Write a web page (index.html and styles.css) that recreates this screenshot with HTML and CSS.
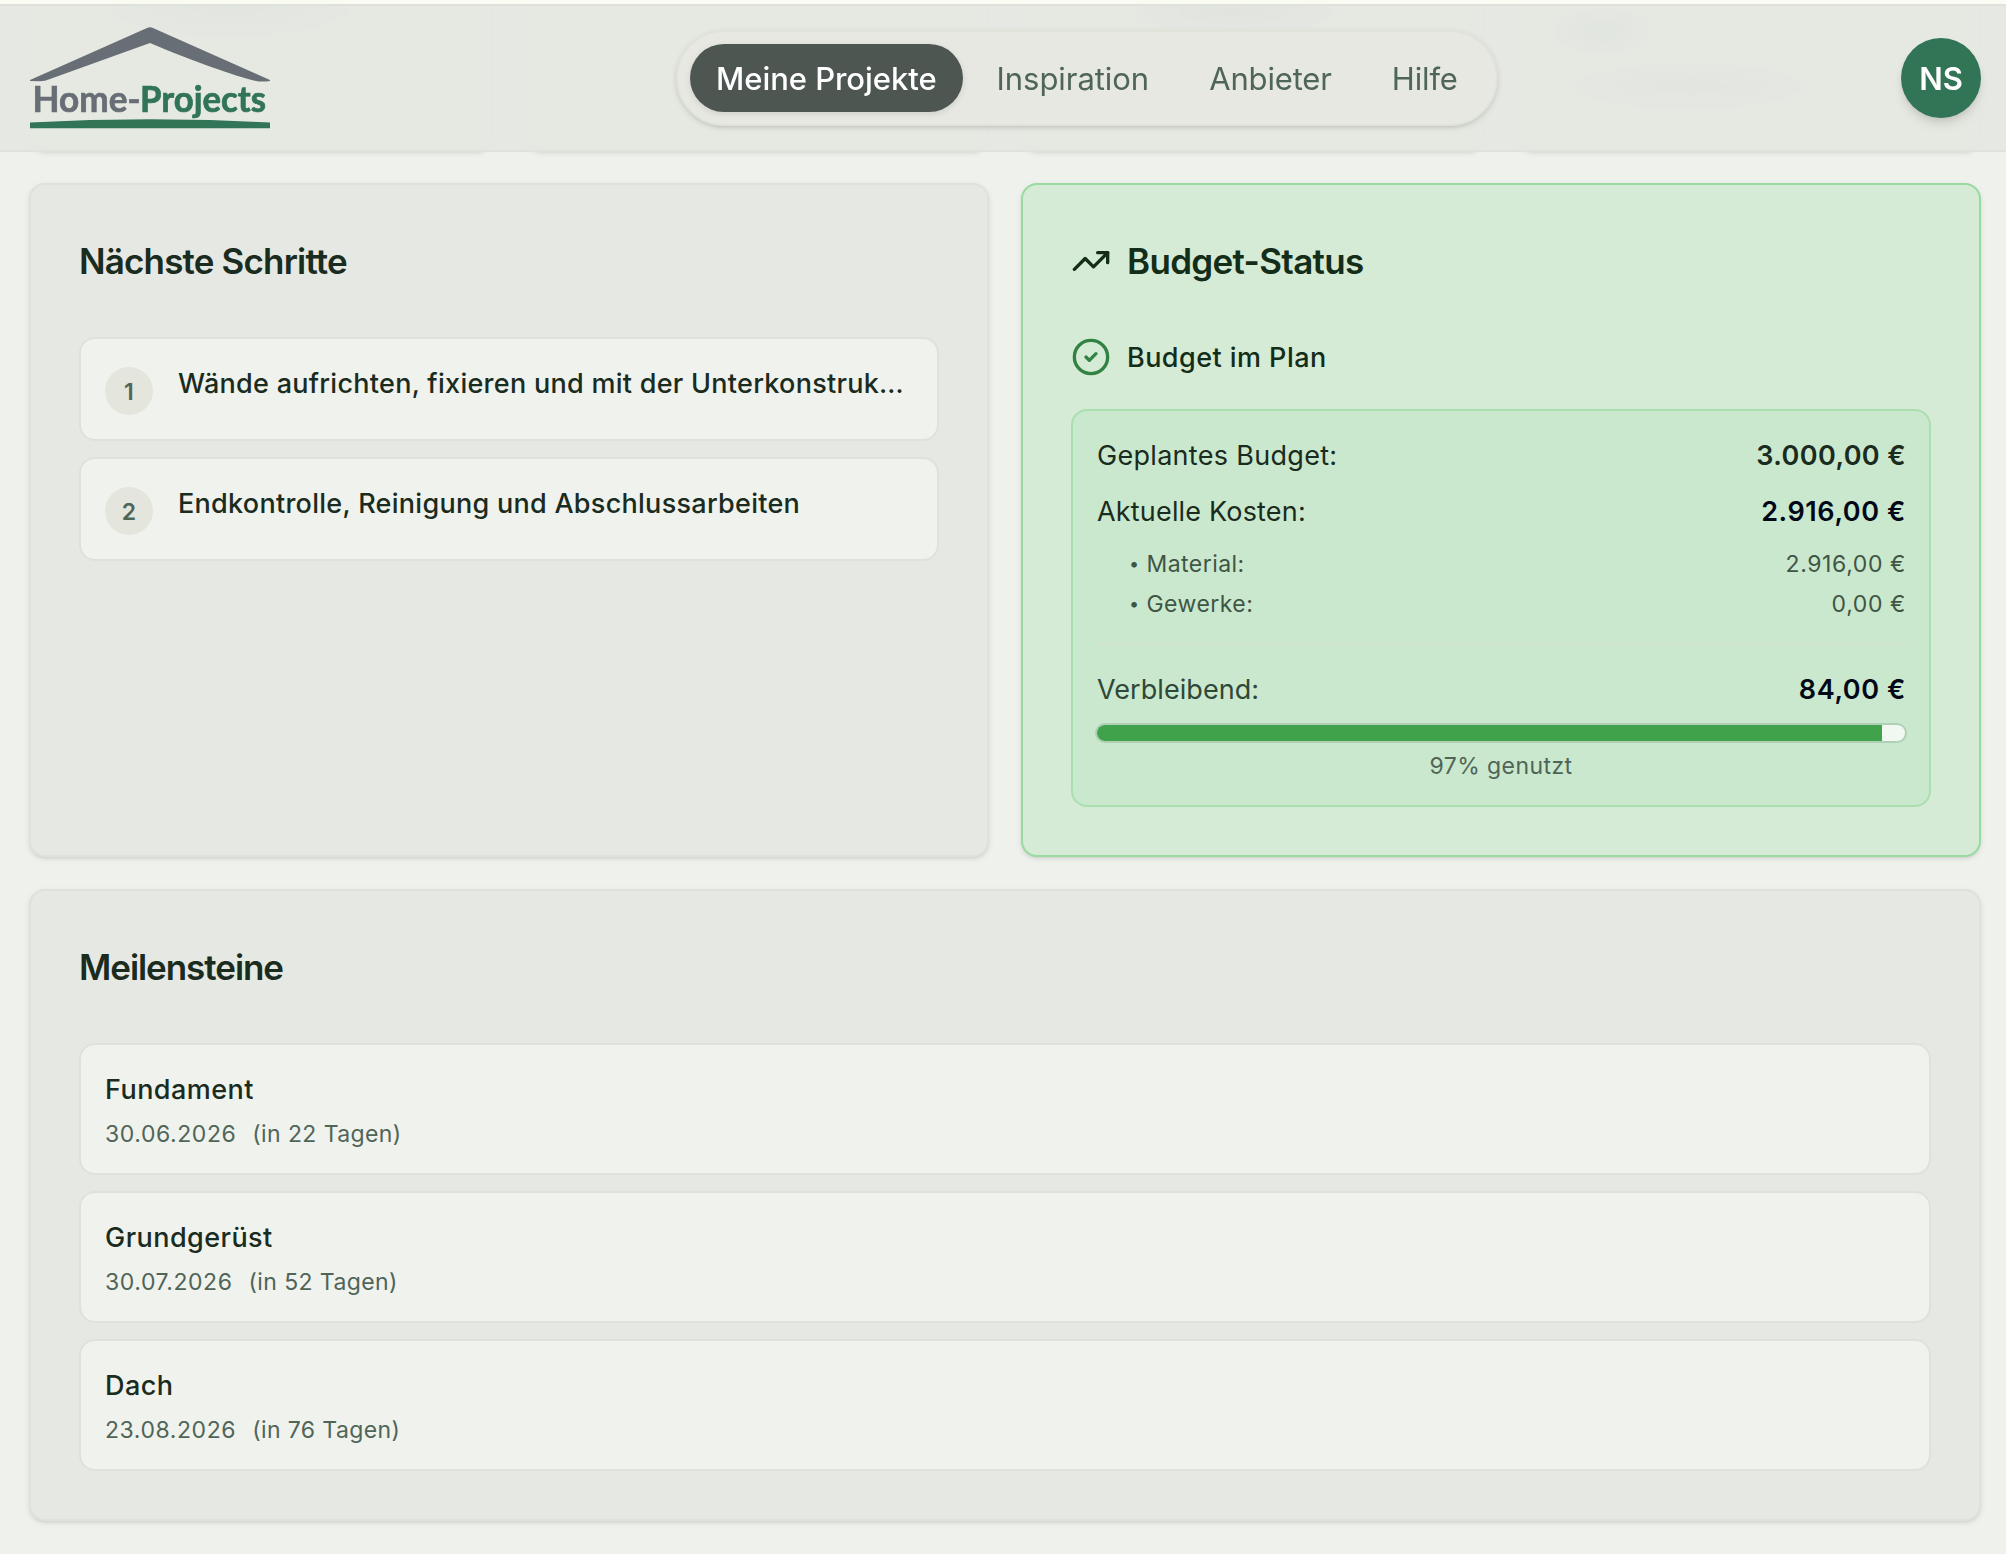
FILE: index.html
```html
<!DOCTYPE html>
<html lang="de">
<head>
    <meta charset="UTF-8">
    <meta name="viewport" content="width=device-width, initial-scale=1.0">
    <title>Home-Projects</title>
    <link rel="stylesheet" href="styles.css">
</head>
<body>
    <header class="header">
        <a class="logo" href="#">
            <svg class="logo-svg" width="240" height="104" viewBox="0 0 240 104">
                <path fill="#686e75" d="M0 54V53L117 1Q120 -.6 123 1L240 53V54Q232 55 226 54C205 49 165 35 120 16L20 52Q15 54.300 10 54.300Z"/>
                <text class="logo-text logo-home" x="2.5" y="85" textLength="108" lengthAdjust="spacingAndGlyphs">Home-</text>
                <text class="logo-text logo-projects" x="110" y="85" textLength="126" lengthAdjust="spacingAndGlyphs">Projects</text>
                <path fill="#317456" d="M0 95.500Q120 89 240 95.500V101.300H0Z"/>
            </svg>
        </a>
        <nav class="nav">
            <a class="nav-item active" href="#">Meine Projekte</a>
            <a class="nav-item" href="#">Inspiration</a>
            <a class="nav-item nav-tight" href="#">Anbieter</a>
            <a class="nav-item nav-tight" href="#">Hilfe</a>
        </nav>
        <button class="avatar">NS</button>
    </header>

    <main class="container">
        <section class="stats">
            <div class="card stat"></div>
            <div class="card stat"></div>
            <div class="card stat"></div>
            <div class="card stat"></div>
        </section>

        <div class="columns">
            <section class="card">
                <h2 class="title">Nächste Schritte</h2>
                <ol class="list">
                    <li class="item step">
                        <span class="number">1</span>
                        <p class="name">Wände aufrichten, fixieren und mit der Unterkonstruk…</p>
                    </li>
                    <li class="item step">
                        <span class="number">2</span>
                        <p class="name">Endkontrolle, Reinigung und Abschlussarbeiten</p>
                    </li>
                </ol>
            </section>

            <section class="card budget">
                <h2 class="title title-budget">
                    <svg class="icon" viewBox="0 0 24 24">
                        <polyline points="22 7 13.5 15.5 8.5 10.5 2 17"/>
                        <polyline points="16 7 22 7 22 13"/>
                    </svg>
                    Budget-Status
                </h2>
                <div class="status">
                    <svg class="icon icon-ok" viewBox="0 0 24 24">
                        <circle cx="12" cy="12" r="10"/>
                        <path d="m9 12 2 2 4-4"/>
                    </svg>
                    <span class="status-text">Budget im Plan</span>
                </div>
                <div class="panel">
                    <div class="row">
                        <span class="label">Geplantes Budget:</span>
                        <strong class="amount">3.000,00 €</strong>
                    </div>
                    <div class="row">
                        <span class="label label-costs">Aktuelle Kosten:</span>
                        <strong class="amount dark">2.916,00 €</strong>
                    </div>
                    <div class="details">
                        <div class="row small">
                            <span class="detail"><span class="bullet">•</span> Material:</span>
                            <span>2.916,00 €</span>
                        </div>
                        <div class="row small">
                            <span class="detail"><span class="bullet">•</span> Gewerke:</span>
                            <span>0,00 €</span>
                        </div>
                    </div>
                    <div class="remaining">
                        <div class="row">
                            <span class="label label-remaining">Verbleibend:</span>
                            <strong class="amount dark">84,00 €</strong>
                        </div>
                        <div class="progress">
                            <div class="progress-bar" style="width: 97.2%"></div>
                        </div>
                        <p class="used">97% genutzt</p>
                    </div>
                </div>
            </section>
        </div>

        <section class="card">
            <h2 class="title title-milestones">Meilensteine</h2>
            <ul class="list">
                <li class="item milestone">
                    <p class="name">Fundament</p>
                    <p class="date"><span>30.06.2026</span><span class="days">(in 22 Tagen)</span></p>
                </li>
                <li class="item milestone">
                    <p class="name">Grundgerüst</p>
                    <p class="date"><span>30.07.2026</span><span class="days">(in 52 Tagen)</span></p>
                </li>
                <li class="item milestone">
                    <p class="name">Dach</p>
                    <p class="date"><span>23.08.2026</span><span class="days">(in 76 Tagen)</span></p>
                </li>
            </ul>
        </section>
    </main>
</body>
</html>
```
FILE: styles.css
```css
:root{
    --background: #eff1ec;
    --card: #e6e8e3;
    --border: #dfe2d9;
    --text: #1a2b20;
    --muted: #4f6558;
    --green: #317456;
}
*,*::before,*::after{
    box-sizing: border-box;
    margin: 0;
    padding: 0;
}
body{
    height: 1554px;
    overflow: hidden;
    font-family: Inter, sans-serif;
    font-size: 27px;
    line-height: 38px;
    letter-spacing: 0.3px;
    color: var(--text);
    background-color: var(--background);
    border-top: 4px solid #fafbf2;
}

/* header */
.header{
    position: fixed;
    top: 4px;
    left: 0;
    right: 0;
    z-index: 10;
    height: 148px;
    padding: 0 25px 0 30px;
    display: flex;
    align-items: center;
    justify-content: space-between;
    background-color: rgba(229, 232, 226, 0.97);
    background-image:
        radial-gradient(160px 40px at 230px 0, rgba(215, 221, 213, 0.25), transparent),
        radial-gradient(120px 30px at 1235px 5px, rgba(215, 219, 213, 0.35), transparent),
        radial-gradient(60px 28px at 1602px 25px, rgba(215, 221, 215, 0.3), transparent),
        radial-gradient(150px 30px at 1690px 80px, rgba(215, 221, 215, 0.25), transparent);
    border-top: 2px solid #dfe2da;
    border-bottom: 2px solid #e0e3dc;
}
.logo{
    display: block;
    width: 240px;
    height: 104px;
    margin-top: 2px;
}
.logo-svg{
    display: block;
    overflow: visible;
}
.logo-text{
    font-family: Lato, sans-serif;
    font-size: 36px;
    font-weight: 700;
    letter-spacing: 0;
    stroke-width: 0.7px;
}
.logo-home{
    fill: #686e75;
    stroke: #686e75;
}
.logo-projects{
    fill: var(--green);
    stroke: var(--green);
}
.nav{
    display: flex;
    gap: 8px;
    height: 96px;
    margin-left: 406px;
    margin-right: auto;
    padding: 12px;
    background-color: #e7e8e2;
    border: 2px solid #dfe3da;
    border-radius: 48px;
    box-shadow: 0 2px 6px rgba(0, 0, 0, 0.1), 0 2px 4px -2px rgba(0, 0, 0, 0.15);
}
.nav-item{
    padding: 2px 26px 0;
    border-radius: 34px;
    font-size: 31px;
    line-height: 66px;
    letter-spacing: -0.05px;
    color: var(--muted);
    text-decoration: none;
}
.nav-tight{
    letter-spacing: -0.15px;
}
.nav-item.active{
    font-weight: 500;
    color: #fff;
    background-color: #4e5652;
    box-shadow: 0 2px 6px rgba(0, 0, 0, 0.1);
}
.avatar{
    width: 80px;
    height: 80px;
    border: none;
    border-radius: 50%;
    font: 600 31px Inter, sans-serif;
    color: #fff;
    background-color: var(--green);
    box-shadow: 0 8px 12px -2px rgba(0, 0, 0, 0.1), 0 4px 8px -4px rgba(0, 0, 0, 0.15);
}

/* cards */
.container{
    display: flex;
    flex-direction: column;
    gap: 32px;
    padding: 0 25px 32px 29px;
}
.stats{
    display: grid;
    grid-template-columns: repeat(4, 1fr);
    gap: 32px;
    height: 147px;
}
.columns{
    display: grid;
    grid-template-columns: 1fr 1fr;
    gap: 32px;
}
.card{
    padding: 48px;
    background-color: var(--card);
    border: 2px solid var(--border);
    border-radius: 16px;
    box-shadow: 0 2px 6px rgba(0, 0, 0, 0.08), 0 2px 4px -2px rgba(0, 0, 0, 0.12);
}
.stat{
    border-radius: 0 0 16px 16px;
}
.title{
    display: flex;
    align-items: center;
    gap: 16px;
    margin-bottom: 48px;
    font-size: 35px;
    font-weight: 600;
    line-height: 56px;
    letter-spacing: -0.83px;
}
.title-budget{
    letter-spacing: -0.68px;
    color: #132d19;
}
.title-milestones{
    letter-spacing: -1.05px;
}
.list{
    display: flex;
    flex-direction: column;
    gap: 16px;
    list-style: none;
}
.item{
    padding: 24px;
    background-color: #f0f2ed;
    border: 2px solid var(--border);
    border-radius: 16px;
}
.step{
    display: flex;
    align-items: flex-start;
    gap: 25px;
}
.number{
    flex: none;
    width: 48px;
    height: 48px;
    margin-top: 4px;
    padding-top: 2px;
    border-radius: 50%;
    font-size: 23px;
    font-weight: 600;
    line-height: 46px;
    text-align: center;
    color: var(--muted);
    background-color: #e4e5dc;
}
.name{
    padding-top: 2px;
    font-weight: 500;
    white-space: nowrap;
}
.step .name{
    letter-spacing: 0.28px;
}
.milestone .name{
    letter-spacing: 0.45px;
}
.date{
    display: flex;
    gap: 16px;
    margin-top: 8px;
    padding-top: 2px;
    font-size: 23px;
    line-height: 30px;
    letter-spacing: 0.57px;
    color: var(--muted);
}
.days{
    letter-spacing: 0.4px;
}

/* budget */
.budget{
    background-color: #d6ebd6;
    border-color: #96dba0;
}
.icon{
    flex: none;
    width: 40px;
    height: 40px;
    fill: none;
    stroke: #132d19;
    stroke-width: 2;
    stroke-linecap: round;
    stroke-linejoin: round;
}
.icon-ok{
    stroke: #328243;
}
.status{
    display: flex;
    align-items: center;
    gap: 16px;
    margin-bottom: 32px;
    font-weight: 500;
    letter-spacing: 0.45px;
    color: #132d19;
}
.status-text{
    padding-top: 2px;
}
.panel{
    padding: 24px;
    background-color: #cae8cd;
    border: 2px solid #aadfb0;
    border-radius: 16px;
}
.row{
    display: flex;
    justify-content: space-between;
    margin-bottom: 16px;
    margin-right: -1px;
    padding-top: 2px;
}
.amount{
    font-weight: 600;
    letter-spacing: 0.4px;
}
.dark{
    letter-spacing: 0.6px;
    color: #020817;
}
.details{
    padding-left: 32px;
}
.small{
    height: 32px;
    margin-bottom: 8px;
    font-size: 23px;
    line-height: 30px;
    letter-spacing: 0.6px;
    color: #3f5546;
}
.detail{
    letter-spacing: 0.45px;
}
.bullet{
    font-size: 18px;
    line-height: 1;
    vertical-align: 2px;
}
.remaining{
    margin-top: 24px;
    padding-top: 24px;
    border-top: 2px solid #d3e4d1;
}
.label-costs{
    letter-spacing: 0.18px;
}
.label-remaining{
    letter-spacing: 0.06px;
    color: #2f4738;
}
.progress{
    height: 16px;
    border-radius: 8px;
    overflow: hidden;
    background-color: #f1f8f1;
    box-shadow: 0 0 0 2px #afd0b4;
}
.progress-bar{
    height: 100%;
    background-color: #40a24b;
}
.used{
    margin-top: 8px;
    padding-top: 2px;
    font-size: 23px;
    line-height: 30px;
    letter-spacing: 0.42px;
    text-align: center;
    color: var(--muted);
}
```
